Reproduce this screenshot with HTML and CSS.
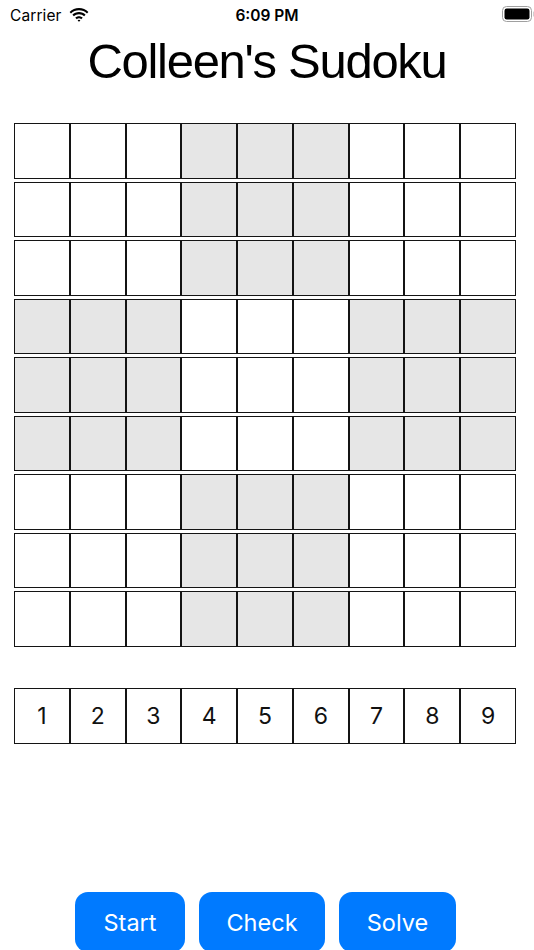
FILE: index.html
```html
<!DOCTYPE html>
<html>
<head>
<meta charset="utf-8">
<link rel="stylesheet" href="styles.css">
</head>
<body>
<div class="screen">
  <div class="status">
    <div class="status-left">
      <span class="carrier">Carrier</span>
      <svg class="wifi" width="20" height="14" viewBox="0 0 20 14">
        <path d="M10 2.2c3.1 0 5.9 1.2 8 3.2l1.4-1.5C16.9 1.5 13.6 0 10 0S3.1 1.5.6 3.9L2 5.4c2.1-2 4.9-3.2 8-3.2z" fill="#000"/>
        <path d="M10 6.3c2 0 3.8.8 5.1 2l1.5-1.5C14.9 5.1 12.6 4.1 10 4.1S5.1 5.1 3.4 6.8l1.5 1.5c1.3-1.2 3.1-2 5.1-2z" fill="#000"/>
        <path d="M10 10.3c.9 0 1.6.3 2.2.9l1.5-1.5C12.7 8.7 11.4 8.2 10 8.2s-2.7.5-3.7 1.5l1.5 1.5c.6-.6 1.3-.9 2.2-.9z" fill="#000"/>
        <path d="M10 13.8l1.4-1.4c-.4-.4-.9-.6-1.4-.6s-1 .2-1.4.6z" fill="#000"/>
      </svg>
    </div>
    <span class="time">6:09 PM</span>
    <div class="status-right">
      <svg class="battery" width="34" height="16" viewBox="0 0 34 16">
        <rect x="0.5" y="0.5" width="29" height="15" rx="4" ry="4" fill="none" stroke="#a0a0a0" stroke-width="1"/>
        <rect x="2.5" y="2.5" width="25" height="11" rx="2.2" ry="2.2" fill="#000"/>
        <path d="M31.5 5.5v5c1-.3 1.7-1.3 1.7-2.5s-.7-2.2-1.7-2.5z" fill="#a0a0a0"/>
      </svg>
    </div>
  </div>

  <h1 class="title">Colleen's Sudoku</h1>

  <div class="board">
    <div class="cell"></div><div class="cell"></div><div class="cell"></div><div class="cell shade"></div><div class="cell shade"></div><div class="cell shade"></div><div class="cell"></div><div class="cell"></div><div class="cell"></div>
    <div class="cell"></div><div class="cell"></div><div class="cell"></div><div class="cell shade"></div><div class="cell shade"></div><div class="cell shade"></div><div class="cell"></div><div class="cell"></div><div class="cell"></div>
    <div class="cell"></div><div class="cell"></div><div class="cell"></div><div class="cell shade"></div><div class="cell shade"></div><div class="cell shade"></div><div class="cell"></div><div class="cell"></div><div class="cell"></div>
    <div class="cell shade"></div><div class="cell shade"></div><div class="cell shade"></div><div class="cell"></div><div class="cell"></div><div class="cell"></div><div class="cell shade"></div><div class="cell shade"></div><div class="cell shade"></div>
    <div class="cell shade"></div><div class="cell shade"></div><div class="cell shade"></div><div class="cell"></div><div class="cell"></div><div class="cell"></div><div class="cell shade"></div><div class="cell shade"></div><div class="cell shade"></div>
    <div class="cell shade"></div><div class="cell shade"></div><div class="cell shade"></div><div class="cell"></div><div class="cell"></div><div class="cell"></div><div class="cell shade"></div><div class="cell shade"></div><div class="cell shade"></div>
    <div class="cell"></div><div class="cell"></div><div class="cell"></div><div class="cell shade"></div><div class="cell shade"></div><div class="cell shade"></div><div class="cell"></div><div class="cell"></div><div class="cell"></div>
    <div class="cell"></div><div class="cell"></div><div class="cell"></div><div class="cell shade"></div><div class="cell shade"></div><div class="cell shade"></div><div class="cell"></div><div class="cell"></div><div class="cell"></div>
    <div class="cell"></div><div class="cell"></div><div class="cell"></div><div class="cell shade"></div><div class="cell shade"></div><div class="cell shade"></div><div class="cell"></div><div class="cell"></div><div class="cell"></div>
  </div>

  <div class="numbers">
    <div class="num">1</div><div class="num">2</div><div class="num">3</div><div class="num">4</div><div class="num">5</div><div class="num">6</div><div class="num">7</div><div class="num">8</div><div class="num">9</div>
  </div>

  <div class="actions">
    <button class="btn btn-start">Start</button>
    <button class="btn btn-check">Check</button>
    <button class="btn btn-solve">Solve</button>
  </div>
</div>
</body>
</html>
```
FILE: styles.css
```css
html, body {
  margin: 0;
  padding: 0;
  background: #ffffff;
}

.screen {
  width: 534px;
  height: 950px;
  overflow: hidden;
  font-family: Inter, "Liberation Sans", sans-serif;
  color: #000;
}

.status {
  height: 30px;
  display: flex;
  align-items: center;
  justify-content: space-between;
  padding: 0 10px 0 10px;
  position: relative;
}

.status-left {
  display: flex;
  align-items: center;
  gap: 7px;
}

.carrier {
  font-size: 15.5px;
  letter-spacing: 0.1px;
}

.wifi {
  display: block;
  margin-top: -1px;
}

.time {
  position: absolute;
  left: 0;
  right: 0;
  text-align: center;
  font-size: 15.5px;
  font-weight: 600;
  pointer-events: none;
}

.status-right {
  display: flex;
  align-items: center;
}

.battery {
  display: block;
  margin-right: -12px;
  margin-top: -2px;
}

.title {
  margin: 3px 0 0 0;
  text-align: center;
  font-family: "Liberation Sans", Arial, sans-serif;
  font-size: 49px;
  font-weight: 400;
  line-height: 56px;
  letter-spacing: -1.3px;
}

.board {
  margin: 34px 0 0 14px;
  width: 502px;
  display: grid;
  grid-template-columns: repeat(9, 1fr);
  grid-auto-rows: 55.5px;
  row-gap: 3px;
}

.cell {
  border: 1px solid #141414;
  background: #ffffff;
}

.cell.shade {
  background: #e6e6e6;
}

.numbers {
  margin: 41.5px 0 0 14px;
  width: 502px;
  display: grid;
  grid-template-columns: repeat(9, 1fr);
  grid-auto-rows: 55.5px;
}

.num {
  border: 1px solid #141414;
  display: flex;
  align-items: center;
  justify-content: center;
  font-size: 23px;
  color: #111;
}

.actions {
  margin: 148.5px 0 0 75px;
  display: flex;
  gap: 14px;
}

.btn {
  height: 60px;
  border: none;
  border-radius: 13px;
  background: #007aff;
  color: #ffffff;
  font-family: Inter, "Liberation Sans", sans-serif;
  font-size: 23.5px;
  padding: 0;
  margin: 0;
}

.btn-start { width: 110px; }
.btn-check { width: 126px; }
.btn-solve { width: 117px; }
```
